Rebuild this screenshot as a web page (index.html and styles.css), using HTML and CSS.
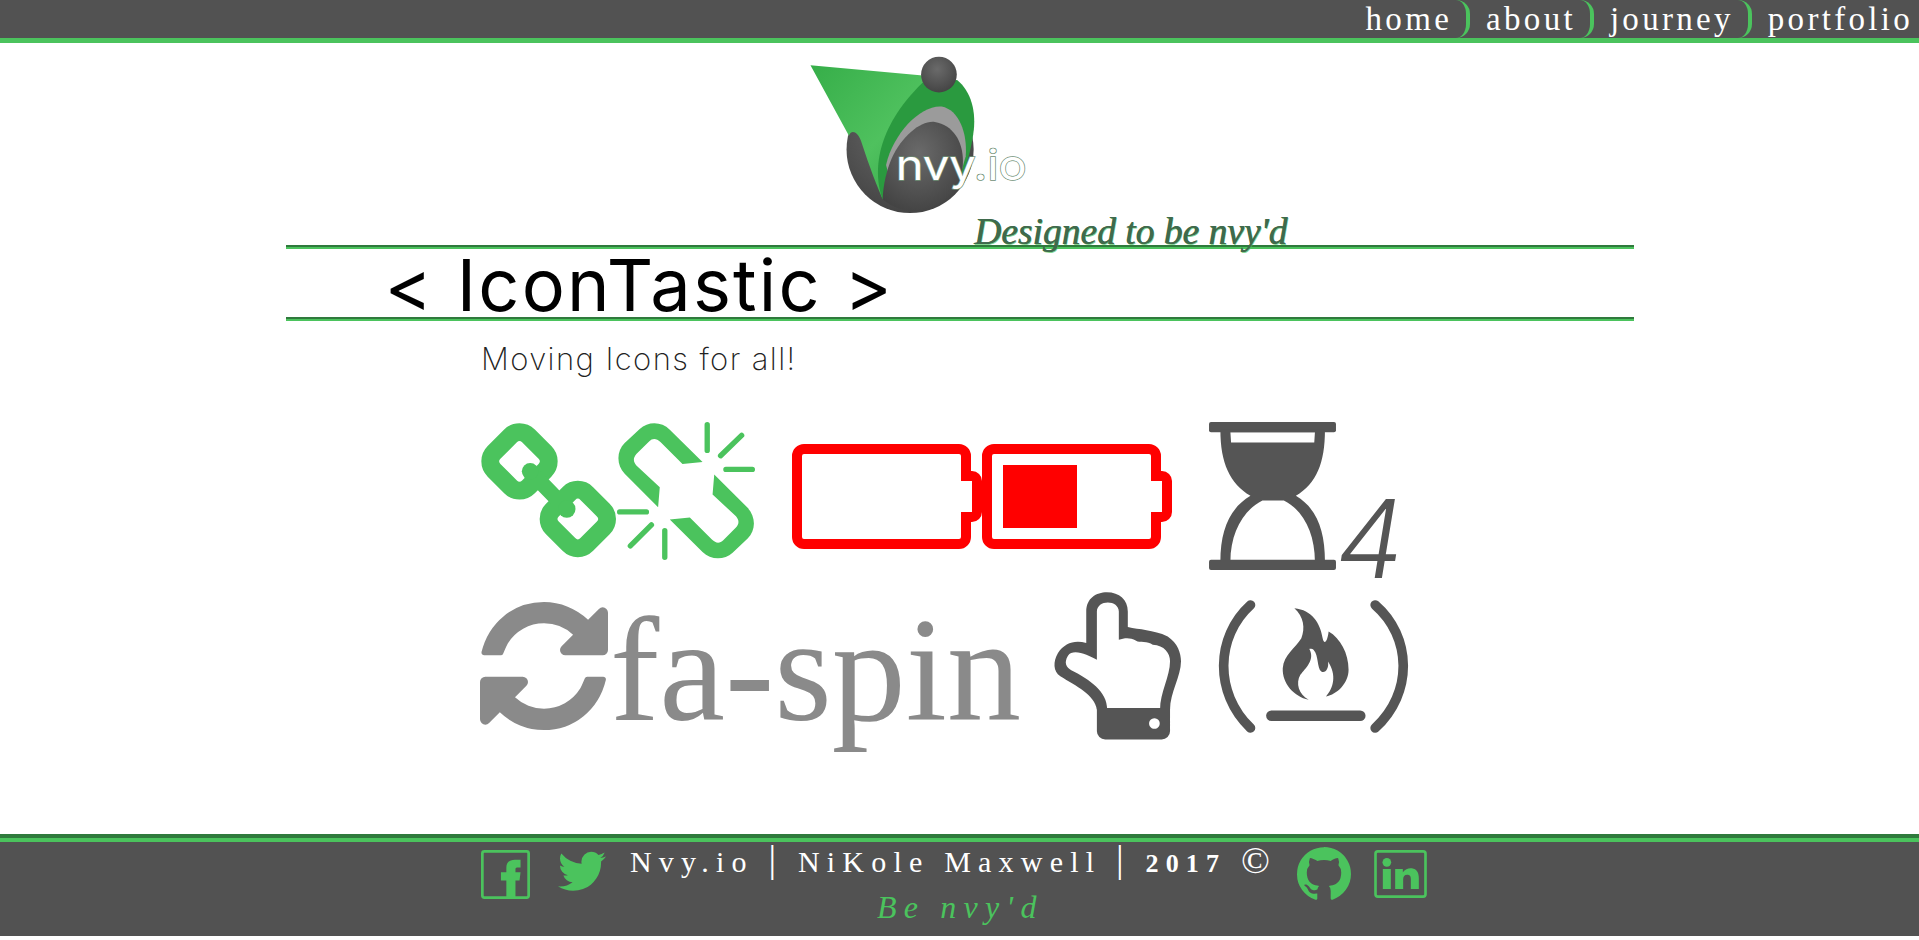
FILE: index.html
```html
<!DOCTYPE html>
<html lang="en">
<head>
<meta charset="utf-8">
<title>IconTastic</title>
<link rel="stylesheet" href="styles.css">
</head>
<body>
<header class="topbar">
  <nav class="nav">
    <a class="nav-link nav-sep">home</a>
    <a class="nav-link nav-sep">about</a>
    <a class="nav-link nav-sep">journey</a>
    <a class="nav-link">portfolio</a>
  </nav>
</header>

<section class="brand">
  <svg class="logo" viewBox="85 45 635 460">
    <defs>
      <radialGradient id="ball" cx="45%" cy="35%" r="75%">
        <stop offset="0" stop-color="#6a6a6a"/><stop offset="1" stop-color="#3f3f3f"/>
      </radialGradient>
      <linearGradient id="cone" x1="0" y1="0" x2="1" y2="1">
        <stop offset="0" stop-color="#36ae49"/><stop offset="0.55" stop-color="#4fc15e"/><stop offset="1" stop-color="#35a548"/>
      </linearGradient>
    </defs>
    <circle cx="378" cy="320" r="185" fill="url(#ball)"/>
    <path d="M88 75 L415 105 L450 130 L340 300 L298 465 C270 400 250 340 235 295 C225 265 205 262 200 280 Z" fill="url(#cone)"/>
    <path d="M415 125 L515 118 C555 150 572 210 562 275 C555 320 545 360 530 390 L298 465 C270 390 275 260 415 125 Z" fill="#2a9a3f"/>
    <path d="M308 365 C330 270 410 190 470 195 C520 205 545 270 540 340 L520 410 L320 410 Z" fill="#9b9b9b"/>
    <path d="M298 465 C300 420 310 380 325 345 C355 280 410 235 450 240 C510 250 540 310 530 380 C520 430 495 460 450 485 C400 510 340 500 298 465 Z" fill="url(#ball)"/>
    <circle cx="462" cy="102" r="52" fill="url(#ball)"/>
    <text class="logo-text" x="336" y="410" textLength="382" lengthAdjust="spacingAndGlyphs">nvy.io</text>
  </svg>
  <p class="tagline">Designed to be nvy'd</p>
</section>

<div class="rule"></div>
<h1 class="title">&lt; IconTastic &gt;</h1>
<div class="rule"></div>

<main class="content">
  <p class="lead">Moving Icons for all!</p>

  <div class="icon-row">
    <svg class="ic-chain" viewBox="33 40 407 405" fill="none" stroke="#4bc35d">
      <rect x="75" y="82" width="146" height="146" rx="38" stroke-width="54" transform="rotate(45 148 155)"/>
      <rect x="250" y="255" width="146" height="146" rx="38" stroke-width="54" transform="rotate(45 323 328)"/>
      <path d="M180 185 L290 298" stroke-width="46" stroke-linecap="round"/>
      <circle cx="180" cy="185" r="25" fill="#4bc35d" stroke="none"/>
      <circle cx="290" cy="298" r="26" fill="#4bc35d" stroke="none"/>
    </svg>
    <svg class="ic-broken" viewBox="442 37 413 413" fill="#4bc35d">
      <path d="M698 157 L638 163 L572 97 C560 85 548 85 538 95 L500 133 C490 145 490 155 500 167 L570 232 L565 292 L465 192 C440 165 440 125 465 100 L510 58 C535 35 575 35 600 60 Z"/>
      <path d="M698 157 L638 163 L572 97 C560 85 548 85 538 95 L500 133 C490 145 490 155 500 167 L570 232 L565 292 L465 192 C440 165 440 125 465 100 L510 58 C535 35 575 35 600 60 Z" transform="rotate(180 649 243)"/>
      <path d="M712 45 V122 M815 77 L752 138 M768 179 H847 M450 306 H530 M545 345 L482 408 M585 362 V442" fill="none" stroke="#4bc35d" stroke-width="16" stroke-linecap="round"/>
    </svg>
    <svg class="ic-battery" viewBox="0 0 190 105" fill="#ff0000">
      <path fill-rule="evenodd" d="M12 0 H167 a12 12 0 0 1 12 12 V27 H180 a10 10 0 0 1 10 10 V68 a10 10 0 0 1 -10 10 H179 V93 a12 12 0 0 1 -12 12 H12 a12 12 0 0 1 -12 -12 V12 a12 12 0 0 1 12 -12 Z M12 10 a2 2 0 0 0 -2 2 V93 a2 2 0 0 0 2 2 H167 a2 2 0 0 0 2 -2 V68 H180 V37 H169 V12 a2 2 0 0 0 -2 -2 Z"/>
    </svg>
    <svg class="ic-battery ic-battery-next" viewBox="0 0 190 105" fill="#ff0000">
      <path fill-rule="evenodd" d="M12 0 H167 a12 12 0 0 1 12 12 V27 H180 a10 10 0 0 1 10 10 V68 a10 10 0 0 1 -10 10 H179 V93 a12 12 0 0 1 -12 12 H12 a12 12 0 0 1 -12 -12 V12 a12 12 0 0 1 12 -12 Z M12 10 a2 2 0 0 0 -2 2 V93 a2 2 0 0 0 2 2 H167 a2 2 0 0 0 2 -2 V68 H180 V37 H169 V12 a2 2 0 0 0 -2 -2 Z"/>
      <rect x="21" y="21" width="74" height="63"/>
    </svg>
    <svg class="ic-hourglass" viewBox="58 37 380 443" fill="#555555">
      <rect x="58" y="37" width="380" height="31" rx="6"/>
      <rect x="58" y="449" width="380" height="31" rx="6"/>
      <path fill-rule="evenodd" d="M92 60 C92 160 120 220 182 258 C120 295 92 360 92 455 H122 C122 370 160 300 218 272 H282 C340 300 375 370 375 455 H405 C405 360 380 295 318 258 C380 220 405 160 405 60 Z M122 68 H375 L373 98 H124 Z"/>
    </svg>
    <span class="count">4</span>
  </div>

  <div class="icon-row icon-row-second">
    <svg class="ic-refresh" viewBox="128 128 1536 1536" fill="#8a8a8a">
      <path d="M1639 1056q0 5-1 7-64 268-268 434.5t-478 166.5q-146 0-282.5-55t-243.5-157l-129 129q-19 19-45 19t-45-19-19-45v-448q0-26 19-45t45-19h448q26 0 45 19t19 45-19 45l-137 137q71 66 161 102t187 36q134 0 250-65t186-179q11-17 53-117 8-23 30-23h192q13 0 22.5 9.5t9.5 22.5zm25-800v448q0 26-19 45t-45 19h-448q-26 0-45-19t-19-45 19-45l138-138q-148-137-349-137-134 0-250 65t-186 179q-11 17-53 117-8 23-30 23h-199q-13 0-22.5-9.5t-9.5-22.5v-7q65-268 270-434.5t480-166.5q146 0 284 55.5t245 156.5l130-129q19-19 45-19t45 19 19 45z"/>
    </svg>
    <span class="spin-label">fa-spin</span>
    <svg class="ic-hand" viewBox="40 37 388 444" fill="#555555">
      <path d="M172 390 C165 345 110 320 62 290 C40 275 40 245 55 220 C75 190 105 180 140 190 V95 C140 55 170 37 202 37 C240 37 265 60 265 95 V142 C300 150 340 150 385 170 C415 190 425 220 425 245 C425 290 392 340 392 390 H362 C362 340 392 290 392 245 C392 220 375 197 340 195 C325 183 300 190 290 183 C270 172 255 175 238 180 V95 C238 78 222 68 205 68 C188 68 172 78 172 95 V240 C145 225 100 205 85 228 C72 250 80 262 95 272 C150 300 203 335 203 390 Z"/>
      <path fill-rule="evenodd" d="M172 385 H392 V455 a25 25 0 0 1 -25 25 H197 a25 25 0 0 1 -25 -25 Z M345 416 a16 16 0 1 0 0.01 0 Z"/>
    </svg>
    <svg class="ic-fcc" viewBox="535 60 576 400" fill="#555555">
      <path d="M635 75 C530 170 525 340 635 445 M1010 75 C1120 170 1125 340 1010 445" fill="none" stroke="#555555" stroke-width="29" stroke-linecap="round"/>
      <path d="M698 408 H965" fill="none" stroke="#555555" stroke-width="32" stroke-linecap="round"/>
      <path d="M767 85 C820 90 845 130 852 175 C855 190 865 195 870 155 C905 175 930 220 930 270 C930 310 895 345 862 350 C885 325 895 285 868 245 C872 265 860 282 848 275 C835 265 840 225 825 210 C820 205 812 207 812 207 C830 240 800 265 785 285 C770 310 780 345 810 360 C765 350 730 310 732 265 C735 225 770 205 788 175 C800 145 795 110 767 85 Z"/>
    </svg>
  </div>
</main>

<footer class="footer">
  <svg class="ic-fb" viewBox="33 75 145 145">
    <rect x="37" y="79" width="137" height="137" rx="6" fill="none" stroke="#4bc35d" stroke-width="8"/>
    <path d="M108 216 V165 H92 V141 H108 V127 C108 112 118 104 133 104 H150 V127 H140 C135 127 135 130 135 134 V141 H150 L147 165 H135 V216 Z" fill="#4bc35d"/>
  </svg>
  <svg class="ic-tw" viewBox="108 270 1576 1300">
    <path fill="#4bc35d" d="M1684 408q-67 98-162 167 1 14 1 42 0 130-38 259.5t-115.5 248.5-184.5 210.5-258 146-323 54.5q-271 0-496-145 35 4 78 4 225 0 401-138-105-2-188-64.5t-114-159.5q33 5 61 5 43 0 85-11-112-23-185.5-111.5t-73.5-205.5v-4q68 38 146 41-66-44-105-115t-39-154q0-88 44-163 121 149 294.5 238.5t371.5 99.5q-8-38-8-74 0-134 94.5-228.5t228.5-94.5q140 0 236 102 109-21 205-78-37 115-142 178 91-10 182-49z"/>
  </svg>
  <div class="credits">
    <p class="credit-line">Nvy.io <span class="pipe">|</span> NiKole Maxwell <span class="pipe">|</span> <span class="year">2017</span> <span class="copy">©</span></p>
    <p class="credit-tag">Be nvy'd</p>
  </div>
  <svg class="ic-gh" viewBox="128 128 1536 1536">
    <path fill="#4bc35d" d="M896 128q209 0 385.5 103t279.5 279.5 103 385.5q0 251-146.5 451.5t-378.5 277.5q-27 5-40-7t-13-30q0-3 .5-76.5t.5-134.5q0-97-52-142 57-6 102.5-18t94-39 81-66.5 53-105 20.5-150.5q0-119-79-206 37-91-8-204-28-9-81 11t-92 44l-38 24q-93-26-192-26t-192 26q-16-11-42.5-27t-83.5-38.5-85-13.5q-45 113-8 204-79 87-79 206 0 85 20.5 150t52.5 105 80.5 67 94 39 102.5 18q-39 36-49 103-21 10-45 15t-57 5-65.5-21.5-55.5-62.5q-19-32-48.5-52t-49.5-24l-20-3q-21 0-29 4.5t-5 11.5 9 14 13 12l7 5q22 10 43.5 38t31.5 51l10 23q13 38 44 63t67 32 69.5 7 55.5-3l23-4q0 38 .5 88.5t.5 54.5q0 18-13 30t-40 7q-232-77-378.5-277.5t-146.5-451.5q0-209 103-385.5t279.5-279.5 385.5-103z"/>
  </svg>
  <svg class="ic-in" viewBox="1212 78 158 144" fill="#4bc35d">
    <rect x="1216" y="82" width="150" height="136" rx="7" fill="none" stroke="#4bc35d" stroke-width="8"/>
    <circle cx="1250" cy="115" r="13"/>
    <rect x="1238" y="135" width="24" height="60"/>
    <path d="M1275 135 H1298 V145 C1305 135 1315 132 1325 133 C1340 135 1346 147 1346 162 V195 H1322 V165 C1322 155 1318 152 1311 152 C1303 152 1299 158 1299 166 V195 H1275 Z"/>
  </svg>
</footer>
</body>
</html>
```

FILE: styles.css
```css
* { box-sizing: border-box; }

html, body {
  margin: 0;
  padding: 0;
  background: #ffffff;
  overflow: hidden;
}

body {
  height: 940px;
  font-family: "Liberation Serif", serif;
}

p, h1 { margin: 0; }

svg { display: block; flex: none; }

/* top bar */
.topbar {
  height: 43px;
  background: #525252;
  border-bottom: 5px solid #4bc35d;
}

.nav {
  display: flex;
  justify-content: flex-end;
  height: 38px;
  padding-right: 6px;
}

.nav-link {
  height: 38px;
  padding: 0 14px 0 0;
  margin-left: 16px;
  font-size: 33px;
  line-height: 38px;
  letter-spacing: 3.3px;
  color: #ffffff;
  white-space: nowrap;
}

.nav-sep {
  border-right: 4px solid #4bc35d;
  border-radius: 0 14px 14px 0;
}

.nav-link:last-child { padding-right: 0; }

/* brand block */
.brand {
  height: 202px;
  padding: 12px 0 0 809px;
}

.logo {
  width: 219px;
  height: 158px;
}

.logo-text {
  font-family: "Inter", sans-serif;
  font-size: 122px;
  font-weight: 400;
  fill: #ffffff;
  stroke: #6f8f76;
  stroke-width: 4px;
  paint-order: stroke;
}

.tagline {
  margin: 3px 0 0 165px;
  font-size: 37.5px;
  line-height: 32px;
  font-style: italic;
  color: #3f6a4c;
  text-shadow: 0.6px 0 0 #3f6a4c, 1px 1px 0 rgba(75, 195, 93, 0.7);
  white-space: nowrap;
}

/* heading */
.rule {
  width: 1348px;
  height: 4px;
  margin: 0 auto;
  border-top: 2px solid #2f7a3c;
  border-bottom: 2px solid #4bc35d;
}

.title {
  width: 1348px;
  height: 68px;
  margin: 0 auto;
  padding: 2px 0 0 99px;
  font-family: "Inter", sans-serif;
  font-size: 72px;
  font-weight: 400;
  line-height: 68px;
  letter-spacing: 2.2px;
  color: #000000;
}

/* content */
.content {
  padding: 0 0 0 481px;
  height: 513px;
}

.lead {
  padding-top: 20px;
  font-family: "Inter", sans-serif;
  font-size: 31px;
  font-weight: 200;
  line-height: 36px;
  letter-spacing: 1.4px;
  color: #222222;
}

.icon-row {
  display: flex;
  align-items: center;
  height: 148px;
  margin-top: 45px;
}

.icon-row-second {
  margin-top: 22px;
}

.ic-chain { width: 136px; height: 135px; margin-bottom: 11px; }
.ic-broken { width: 138px; height: 138px; margin: 0 0 11px; }
.ic-battery { width: 190px; height: 105px; margin-left: 37px; }
.ic-battery-next { margin-left: 0; }
.ic-hourglass { width: 127px; height: 148px; margin-left: 37px; }

.count {
  align-self: flex-end;
  font-family: "Inter", sans-serif;
  font-size: 108px;
  font-weight: 300;
  font-style: italic;
  line-height: 90px;
  color: #555555;
  margin: 0 0 -14px 0;
}

.ic-refresh { width: 128px; height: 128px; margin-left: -1px; }

.spin-label {
  margin: 8px 0 0 2px;
  font-size: 148px;
  line-height: 148px;
  color: #8a8a8a;
  white-space: nowrap;
}

.ic-hand { width: 129px; height: 148px; margin-left: 32px; }
.ic-fcc { width: 192px; height: 133px; margin-left: 35px; }

/* footer */
.footer {
  display: flex;
  align-items: flex-start;
  height: 102px;
  padding: 9px 0 0 481px;
  background: #525252;
  border-top: 4px solid #2f7a3c;
  box-shadow: inset 0 4px 0 #4bc35d;
}

.ic-fb { width: 49px; height: 49px; margin-top: 3px; }
.ic-tw { width: 48px; height: 42px; margin: 4px 0 0 28px; }

.credits {
  width: 644px;
  margin: -3px 0 0 24px;
  color: #ffffff;
}

.credit-line {
  height: 36px;
  font-size: 30px;
  line-height: 36px;
  letter-spacing: 7.2px;
  white-space: nowrap;
}

.pipe { font-size: 38px; line-height: 20px; font-weight: 400; }

.year { font-size: 26px; font-weight: 700; }

.copy { font-size: 38px; line-height: 20px; vertical-align: -1px; }

.credit-tag {
  margin-top: 10px;
  padding-left: 247px;
  font-size: 32px;
  line-height: 34px;
  font-style: italic;
  letter-spacing: 7.2px;
  color: #4bc35d;
}

.ic-gh { width: 54px; height: 54px; margin-left: 23px; }
.ic-in { width: 53px; height: 48px; margin: 3px 0 0 23px; }
```
